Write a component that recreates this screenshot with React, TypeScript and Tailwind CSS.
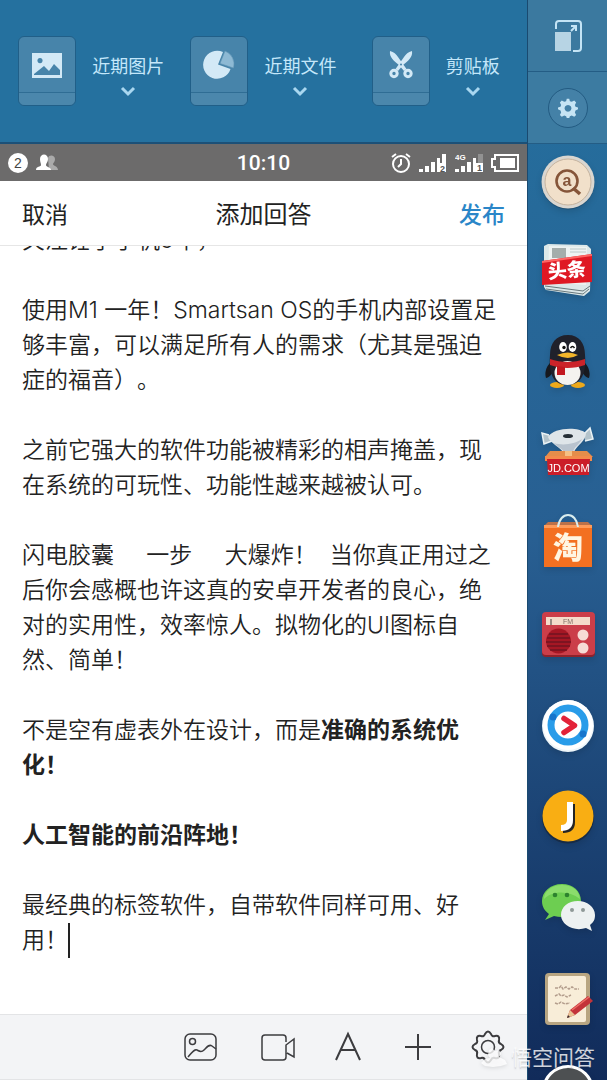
import type { ReactNode } from 'react';

interface Shortcut {
    label: string;
    icon: ReactNode;
}

interface Paragraph {
    lines: ReactNode[];
}

// Recent content trays shown in the top bar.
const TRAYS: Shortcut[] = [
    {
        label: '近期图片',
        icon: (
            <svg viewBox="0 0 32 30" className="h-[30px] w-8">
                <path fill="#d3e9f6" fillRule="evenodd" d="M1 3h30v25H1zM3 24v1h26v-5l-6-6-5 7-5-5zM9 8a2.600 2.600 0 1 0 .01 0z" />
            </svg>
        ),
    },
    {
        label: '近期文件',
        icon: (
            <svg viewBox="0 0 32 30" className="h-[30px] w-8">
                <path fill="#d3e9f6" d="M20 2A14 14 0 1 0 27.500 19L15 14.500z" />
                <path fill="#8db9d4" stroke="#5f93b4" strokeWidth=".6" d="M22 1l-5 12.500 13.500 4.500A14 14 0 0 0 22 1z" />
            </svg>
        ),
    },
    {
        label: '剪贴板',
        icon: (
            <svg viewBox="0 0 24 30" className="h-[30px] w-6">
                <path fill="#d3e9f6" d="M1 1c4 1 6 3 8 6l3.500 5 5 7-2.500 2-5-6C5 11 0 7 1 1z" />
                <path fill="#d3e9f6" d="M23 1c-4 1-6 3-8 6l-3.500 5-5 7L9 21l5-6c5-4 10-8 9-14z" />
                <g fill="none" stroke="#d3e9f6" strokeWidth="3">
                    <circle cx="5" cy="23.500" r="3.200" />
                    <circle cx="19" cy="23.500" r="3.200" />
                </g>
                <circle cx="12" cy="14.500" r="1" fill="#4481a7" />
            </svg>
        ),
    },
];

const PARAGRAPHS: Paragraph[] = [
    { lines: ['关注锤子手机5年，'] },
    { lines: ['使用M1 一年！Smartsan OS的手机内部设置足', '够丰富，可以满足所有人的需求（尤其是强迫', '症的福音）。'] },
    { lines: ['之前它强大的软件功能被精彩的相声掩盖，现', '在系统的可玩性、功能性越来越被认可。'] },
    {
        lines: [
            '闪电胶囊\u00a0\u00a0\u00a0\u00a0 一步\u00a0\u00a0\u00a0\u00a0 大爆炸！\u00a0 当你真正用过之',
            '后你会感概也许这真的安卓开发者的良心，绝',
            '对的实用性，效率惊人。拟物化的UI图标自',
            '然、简单！',
        ],
    },
    {
        lines: [
            <>不是空有虚表外在设计，而是<b className="font-bold">准确的系统优</b></>,
            <b className="font-bold">化！</b>,
        ],
    },
    { lines: [<b className="font-bold">人工智能的前沿阵地！</b>] },
    {
        lines: [
            '最经典的标签软件，自带软件同样可用、好',
            <>用！<span className="inline-block h-[35px] w-0.5 bg-[#222] align-bottom" /></>,
        ],
    },
];

const CJK = 'Noto Sans CJK SC, sans-serif';

const APPS: Shortcut[] = [
    {
        label: '搜索',
        icon: (
            <>
                <circle cx="27" cy="30" r="26.500" fill="#173f5e" opacity=".5" />
                <circle cx="27" cy="29" r="26.500" fill="#d9d6d0" />
                <circle cx="27" cy="29" r="23" fill="#f1e0ca" stroke="#c5b39e" />
                <circle cx="26" cy="28" r="10.500" fill="none" stroke="#855539" strokeWidth="2.600" />
                <path d="M32 35l7 6" stroke="#855539" strokeWidth="3.500" />
                <text x="26" y="33" textAnchor="middle" fontSize="16" fontWeight="bold" fontFamily="Liberation Sans, sans-serif" fill="#855539">a</text>
            </>
        ),
    },
    {
        label: '头条',
        icon: (
            <>
                <path d="M3 2l4-2 39 1 4 4-1 42-6 5-38-6-2-3z" fill="#dce8e9" />
                <path d="M8 2l38 1-1 38-38-3z" fill="#eef3f2" />
                <path d="M11 4h14v10H11z" fill="#a4adab" />
                <path d="M29 5h16M29 8h16" stroke="#bccaca" />
                <path d="M4 42l38 5 7-5M5 45l37 5 6-5" fill="none" stroke="#69787c" />
                <path d="M1 17l50-7v28L1 41z" fill="#df1823" />
                <path d="M1 17l50-7v2L1 19z" fill="#ff6563" />
                <text x="26" y="33" textAnchor="middle" fontSize="19" fontWeight="900" fontFamily={CJK} fill="#fff" transform="rotate(-5 26 27)">头条</text>
            </>
        ),
    },
    {
        label: 'QQ',
        icon: (
            <>
                <path d="M11 26C6 30 3 37 5 43c3 0 6-4 8-8M42 26c5 4 8 11 6 17-3 0-6-4-8-8" fill="#17191f" />
                <ellipse cx="16" cy="50" rx="7" ry="3" fill="#eda91b" />
                <ellipse cx="37" cy="50" rx="7" ry="3" fill="#eda91b" />
                <path d="M27 0C15 0 9 8 9 20c-1 12 0 30 17 30 18 0 19-18 18-30C44 8 38 0 27 0z" fill="#20212b" />
                <ellipse cx="26.500" cy="38" rx="13" ry="12" fill="#f4f3ef" />
                <ellipse cx="22" cy="12" rx="3.800" ry="5" fill="#fff" />
                <ellipse cx="31.500" cy="12" rx="3.800" ry="5" fill="#fff" />
                <circle cx="23" cy="12.500" r="1.700" fill="#111" />
                <path d="M29.500 13q2-3 4 0" fill="none" stroke="#111" strokeWidth="1.500" />
                <path d="M16 20q11-5 21 0-10 6-21 0z" fill="#f3b52a" />
                <path d="M9 24c11 4 24 4 35 0v6c-11 4-24 4-35 0z" fill="#cb2329" />
                <path d="M16 31l8 1v8h-8z" fill="#c2181f" />
            </>
        ),
    },
    {
        label: '京东',
        icon: (
            <>
                <path d="M8 9L1 7l2 11 8-3M43 8l6-6 3 11-8 2" fill="#b3c3cb" stroke="#eaf2f5" strokeWidth="1.500" />
                <path d="M7 11C12 2 36 0 45 7c0 8-9 12-12 19H22C19 21 9 17 7 11z" fill="#dfe5e9" />
                <path d="M13 17c9 3 21 1 28-4-3 6-8 8-9 13h-9c-2-4-7-5-10-9z" fill="#b9c3ce" />
                <ellipse cx="27" cy="10" rx="5" ry="2" fill="#252e36" />
                <path d="M9 25h37l6 6H4z" fill="#e58d4a" />
                <path d="M24 25h7v6h-7z" fill="#f5c083" />
                <path d="M4 30h47v5H4z" fill="#f38b4b" />
                <path d="M6 33h43l-1 16H7z" fill="#cb1d28" />
                <text x="27.500" y="46" textAnchor="middle" fontSize="11" fontFamily="Liberation Sans, sans-serif" fill="#fff">JD.COM</text>
            </>
        ),
    },
    {
        label: '淘宝',
        icon: (
            <>
                <path d="M4 8l3-3h40l3 3v4H4z" fill="#bb7149" />
                <path d="M3 8h48v42H3z" fill="#f37021" />
                <path d="M3 8h48v3H3z" fill="#ff9b59" />
                <path d="M17 10c2-16 18-16 20 0" fill="none" stroke="#d9edee" strokeWidth="2" />
                <text x="27" y="41" textAnchor="middle" fontSize="30" fontWeight="900" fontFamily={CJK} fill="#fff6e2">淘</text>
            </>
        ),
    },
    {
        label: '收音机',
        icon: (
            <>
                <rect x="1" y="6" width="53" height="43" rx="4" fill="#8f222b" />
                <rect x="1" y="4" width="53" height="43" rx="4" fill="#cb3e49" />
                <path d="M5 9h44v8H5z" fill="#f4dcca" />
                <text x="27" y="16" textAnchor="middle" fontSize="7" fontFamily="Liberation Sans, sans-serif" fill="#826f65">FM</text>
                <path d="M10 11v6" stroke="#3d3d3d" />
                <circle cx="17.500" cy="33" r="12.500" fill="#a51724" />
                <path d="M8 26h19M6 30h23M5 34h25M6 38h23M9 42h17" stroke="#701521" strokeWidth="1.600" />
                <circle cx="42" cy="27" r="5.500" fill="#f6dcd5" />
                <circle cx="42" cy="40" r="5.500" fill="#f6dcd5" />
            </>
        ),
    },
    {
        label: '视频',
        icon: (
            <>
                <circle cx="27" cy="27" r="26" fill="#edf5f9" />
                <circle cx="27" cy="26" r="25" fill="#fff" />
                <circle cx="27" cy="26" r="17" fill="none" stroke="#299ce9" strokeWidth="7" />
                <circle cx="12" cy="18" r="3.500" fill="#1675cc" />
                <circle cx="42" cy="35" r="3.500" fill="#1675cc" />
                <path d="M23 19.500l10.500 7-10.500 7" fill="none" stroke="#e32238" strokeWidth="5.500" strokeLinecap="round" strokeLinejoin="round" />
            </>
        ),
    },
    {
        label: '即刻',
        icon: (
            <>
                <circle cx="27" cy="27.500" r="26" fill="#172b46" />
                <circle cx="27" cy="26" r="25.500" fill="#f9ae13" />
                <path d="M29 12v18q0 8-9 8" fill="none" stroke="#242424" strokeWidth="6" transform="translate(2 2)" />
                <path d="M29 12v18q0 8-9 8" fill="none" stroke="#fff" strokeWidth="6" />
            </>
        ),
    },
    {
        label: '微信',
        icon: (
            <>
                <path d="M21 3C9 3 1 11 1 20c0 6 3 10 7 13l-4 6 9-4c16 4 27-5 27-15C40 10 32 3 21 3z" fill="#6dce51" />
                <path d="M21 4C10 4 3 11 3 18c8-8 24-9 36 0C38 9 31 4 21 4z" fill="#8bdd6c" />
                <circle cx="14" cy="14" r="2.300" fill="#2d822e" />
                <circle cx="26" cy="14" r="2.300" fill="#2d822e" />
                <path d="M37 20c-10 0-17 6-17 14 0 10 13 17 25 13l6 3-2-6c4-3 5-6 5-10 0-8-8-14-17-14z" fill="#edf1f1" />
                <circle cx="31" cy="29" r="2" fill="#8e9997" />
                <circle cx="42" cy="29" r="2" fill="#8e9997" />
            </>
        ),
    },
    {
        label: '便签',
        icon: (
            <>
                <rect x="4" y="1" width="45" height="52" rx="4" fill="#b8a581" />
                <rect x="7" y="4" width="38" height="46" rx="2" fill="#f8edd8" />
                <path
                    d="M14 16h4l2-2 2 3 3-2 3 2 3-2 3 2h4M14 24l4-2 2 2 3-1 3 2 4-2M14 31l3 1 3-2 4 2 5-1"
                    fill="none"
                    stroke="#b39d8c"
                    strokeWidth="1.500"
                    strokeDasharray="3 1"
                />
                <path d="M26 46l3-8 18-14 5 5-18 14z" fill="#c3333a" />
                <path d="M26 46l3-8 5 5z" fill="#e9c394" />
                <path d="M26 46l1-3 2 2z" fill="#382b2b" />
                <path d="M31 38l17-13" stroke="#ee6d66" strokeWidth="1.500" />
            </>
        ),
    },
    {
        label: '更多应用',
        icon: <circle cx="27" cy="28" r="24.500" fill="#4d5052" stroke="#fff" strokeWidth="3" />,
    },
];

const TOOLS: Shortcut[] = [
    {
        label: '插入图片',
        icon: (
            <svg viewBox="0 0 41 32" className="h-8 w-[41px]">
                <rect x="1" y="3" width="31" height="26" rx="5" />
                <circle cx="8.500" cy="10.500" r="3" />
                <path d="M4 26c5-6 7-8 9-7s4 3 7 0 5-6 8-4l4 3" />
            </svg>
        ),
    },
    {
        label: '插入视频',
        icon: (
            <svg viewBox="0 0 34 32" className="h-8 w-[34px]">
                <path d="M25 11V7q0-3-3-3H4Q1 4 1 7v19q0 3 3 3h18q3 0 3-3V14l8-6v18l-7-4" />
            </svg>
        ),
    },
    {
        label: '文字样式',
        icon: (
            <svg viewBox="0 0 34 32" className="h-8 w-[34px]">
                <path d="M5 29L17 3l12 26M10 19h14" strokeWidth="2" />
            </svg>
        ),
    },
    {
        label: '添加',
        icon: (
            <svg viewBox="0 0 34 32" className="h-8 w-[34px]">
                <path d="M17 3v26M4 16h26" strokeWidth="2" />
            </svg>
        ),
    },
    {
        label: '设置',
        icon: (
            <svg viewBox="0 0 34 34" className="h-[34px] w-[34px]">
                <path
                    d="M14 4q3-5 6 0 1 3 4 2 5-1 4 4-1 3 2 4 5 3 0 6-3 1-2 4 1 5-4 4-3-1-4 2-3 5-6 0-1-3-4-2-5 1-4-4 1-3-2-4-5-3 0-6 3-1 2-4-1-5 4-4 3 1 4-2z"
                    strokeWidth="2"
                />
                <circle cx="17" cy="17" r="6.500" />
            </svg>
        ),
    },
];

function Tray({ label, icon }: Shortcut) {
    return (
        <button type="button" className="flex items-center gap-4">
            <span className="flex h-[70px] w-[58px] flex-col rounded-md border border-[#215f88] bg-[#4784aa]">
                <span className="flex flex-1 items-center justify-center border-b border-[#2f6d94]">{icon}</span>
                <span className="h-3 rounded-b-md bg-[#4b87ac]" />
            </span>
            <span className="flex flex-col items-center pt-3">
                <span className="text-lg leading-7 text-[#c4e7fa]">{label}</span>
                <svg viewBox="0 0 16 20" className="h-5 w-4" fill="none" stroke="#a9d7f0" strokeWidth="3">
                    <path d="M2 7l6 6 6-6" />
                </svg>
            </span>
        </button>
    );
}

function StatusBar() {
    return (
        <div className="grid h-[37px] shrink-0 grid-cols-3 items-center bg-[#6c6b6b] px-2 text-white">
            <div className="flex items-center gap-2">
                <span className="flex h-5 w-5 items-center justify-center rounded-full bg-white text-sm text-[#444]">2</span>
                <svg viewBox="0 0 22 18" className="h-[18px] w-[22px]">
                    <path fill="#aaa" d="M12 4c1-4 7-3 7 1 0 3-2 4-2 5 0 2 5 2 5 6h-9z" />
                    <path fill="#fff" d="M4 5c0-6 8-6 8 0 0 3-2 4-2 6s5 2 5 5H0c0-4 5-3 5-5S4 8 4 5z" />
                </svg>
            </div>
            <span className="text-center font-[Roboto,sans-serif] text-[21px] leading-6 font-medium">10:10</span>
            <div className="flex items-center justify-end gap-2">
                <svg viewBox="0 0 20 22" className="h-[22px] w-5" fill="none" stroke="#fff" strokeWidth="2">
                    <circle cx="10" cy="12" r="8" />
                    <path d="M10 7v5l-3 3M1 5l4-3M19 5l-4-3" />
                </svg>
                <svg viewBox="0 0 28 22" className="h-[22px] w-7" fill="#fff">
                    <path d="M0 17h4v3H0zM6 14h4v6H6zM12 10h4v10h-4zM18 6h3v14h-3zM23 2h4v18h-6v-9h2z" />
                    <text x="21" y="20" fontSize="9" fontWeight="bold" fill="#555">2</text>
                </svg>
                <svg viewBox="0 0 28 22" className="h-[22px] w-7" fill="#fff">
                    <path d="M0 17h4v3H0zM6 14h4v6H6zM12 10h4v10h-4zM18 6h3v14h-3zM21 11h7v9h-7z" />
                    <path d="M23 2h5v9h-5z" fill="#929292" />
                    <text x="0" y="8" fontSize="8" fontWeight="bold">4G</text>
                    <text x="22" y="19" fontSize="9" fontWeight="bold" fill="#555">1</text>
                </svg>
                <svg viewBox="0 0 28 18" className="h-[18px] w-7" fill="none" stroke="#fff" strokeWidth="2">
                    <path d="M4 1h23v16H4v-4H1V5h3z" />
                    <path d="M9 4h15v10H9z" fill="#fff" stroke="none" />
                </svg>
            </div>
        </div>
    );
}

function Editor() {
    return (
        <div className="flex min-h-0 flex-1 flex-col justify-end overflow-hidden bg-white px-[22px] pb-14">
            <div
                role="textbox"
                aria-label="回答内容"
                aria-multiline="true"
                contentEditable
                suppressContentEditableWarning
                spellCheck={false}
                className="flex flex-col gap-[35px] font-['Inter','Noto_Sans_CJK_SC',sans-serif] text-[23px] leading-[35px] font-[350] whitespace-nowrap text-[#222] outline-none [text-spacing-trim:space-all]"
            >
                {PARAGRAPHS.map((paragraph, i) => (
                    <div key={i}>
                        {paragraph.lines.map((line, j) => (
                            <div key={j} className="h-[35px]">{line}</div>
                        ))}
                    </div>
                ))}
            </div>
        </div>
    );
}

function Dock() {
    return (
        <aside className="flex w-20 shrink-0 flex-col overflow-hidden border-l border-[#1a4a70]">
            <button type="button" aria-label="缩放窗口" className="flex h-[72px] shrink-0 items-center justify-center border-b border-[#245d85] bg-[#3b799f]">
                <svg viewBox="0 0 30 34" className="h-[34px] w-[30px]" fill="none" stroke="#c4e4f5" strokeWidth="2">
                    <path d="M3 10V5q0-3 3-3h19q3 0 3 3v24q0 3-3 3h-5" />
                    <path d="M2 13h16v19H2z" fill="#b7d4e4" stroke="none" />
                    <path d="M18 12l4-4M18 7h5v5" />
                </svg>
            </button>
            <button type="button" aria-label="侧栏设置" className="flex h-[72px] shrink-0 items-center justify-center border-b border-[#245d85] bg-[#3c7ba1]">
                <span className="flex h-10 w-10 items-center justify-center rounded-full border border-[#235b82] bg-[#4481a7]">
                    <svg viewBox="0 0 32 32" className="h-5 w-5">
                        <path
                            fill="#c6e4f4"
                            fillRule="evenodd"
                            d="M14 1h4l1 4 3 1 4-2 3 3-2 4 1 3 4 1v3l-4 2-1 3 2 4-3 3-4-2-3 1-1 3h-4l-1-3-3-1-4 2-3-3 2-4-1-3-4-2v-3l4-1 1-3-2-4 3-3 4 2 3-1zM16 11a5.500 5.500 0 1 0 .01 0z"
                        />
                    </svg>
                </span>
            </button>
            <nav className="flex min-h-0 flex-1 flex-col items-center gap-[37px] overflow-hidden pt-[9px]">
                {APPS.map(app => (
                    <a key={app.label} href="#" aria-label={app.label} className="shrink-0">
                        <svg viewBox="0 0 54 54" className="h-[54px] w-[54px] overflow-visible drop-shadow-md">{app.icon}</svg>
                    </a>
                ))}
            </nav>
        </aside>
    );
}

function Watermark() {
    return (
        <div className="pointer-events-none absolute right-3 bottom-2 flex items-center gap-1 text-white/80">
            <svg viewBox="0 0 26 22" className="h-[22px] w-[26px] drop-shadow-sm" fill="currentColor">
                <path d="M8 3l3-2 3 3 4-1 2 4-2 3 6 3 2 4-6 2-8 1-8-1-4-3 4-4 5-1-2-3z" />
            </svg>
            <span className="text-[21px] leading-7 text-shadow-sm">悟空问答</span>
        </div>
    );
}

export default function App() {
    return (
        <div className="relative flex h-screen overflow-hidden bg-linear-to-b from-[#24719f] via-[#285f92] to-[#112b5a] font-['Liberation_Sans','Noto_Sans_CJK_SC',sans-serif]">
            <div className="flex min-w-0 flex-1 flex-col">
                <div className="grid h-36 shrink-0 grid-cols-3 items-center justify-items-center border-b-2 border-[#1c5077] bg-[#25719f] px-[5px]">
                    {TRAYS.map(tray => (
                        <Tray key={tray.label} {...tray} />
                    ))}
                </div>
                <StatusBar />
                <header className="grid h-[65px] shrink-0 grid-cols-3 items-center border-b border-[#e6e6e6] bg-white px-[22px] pt-1 text-[23px] leading-8 text-[#222]">
                    <button type="button" className="justify-self-start">取消</button>
                    <h1 className="justify-self-center text-2xl leading-8">添加回答</h1>
                    <button type="button" className="justify-self-end font-medium text-[#2a86c8]">发布</button>
                </header>
                <Editor />
                <div className="flex h-[66px] shrink-0 items-center justify-end gap-9 border-y border-[#e3e4e6] bg-[#f3f4f6] pr-[22px]">
                    {TOOLS.map(tool => (
                        <button key={tool.label} type="button" aria-label={tool.label} className="fill-none stroke-[#3c3c3f] stroke-[1.5]">
                            {tool.icon}
                        </button>
                    ))}
                </div>
            </div>
            <Dock />
            <Watermark />
        </div>
    );
}
